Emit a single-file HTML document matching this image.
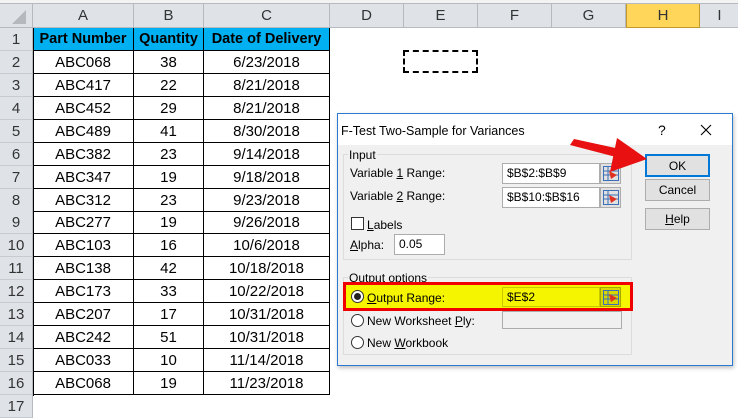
<!DOCTYPE html>
<html><head><meta charset="utf-8"><style>
*{margin:0;padding:0;box-sizing:border-box}
body{width:738px;height:406px;overflow:hidden;background:#fff;font-family:"Liberation Sans",sans-serif;position:relative}
.a{position:absolute}
.ch{position:absolute;top:4px;height:24px;background:#dfe3e8;border-right:1px solid #b6b9bd;border-bottom:1px solid #b6b9bd;text-align:center;font-size:15px;line-height:24px;color:#333}
.rh{position:absolute;left:0;width:33px;height:23px;background:#dfe3e8;border-right:1px solid #b6b9bd;border-bottom:1px solid #c8cbcf;text-align:center;font-size:15px;line-height:23px;color:#333}
.c{position:absolute;height:23px;border-right:1px solid #000;border-bottom:1px solid #000;text-align:center;font-size:15px;line-height:23px;color:#000}
.h{background:#00b0f0;font-weight:bold;font-size:14.5px}
.dl{position:absolute;font-size:12px;color:#000;line-height:14px}
.tf{position:absolute;background:#fff;border:1px solid #acacac;font-size:12px;line-height:18px;padding-left:10px}
.ib{position:absolute;width:21px;height:21px;background:#e1e1e1;border:1px solid #acacac}
.btn{position:absolute;left:645px;width:65px;height:22px;background:#e1e1e1;border:1px solid #adadad;font-size:12px;text-align:center;line-height:20px}
.gb{position:absolute;border:1px solid #dcdcdc}
.rad{position:absolute;width:13px;height:13px;border:1px solid #333;border-radius:50%;background:#fff}
</style></head><body>
<div class="a" style="left:0;top:0;width:738px;height:4px;background:#f3f3f3;border-bottom:1px solid #b6b9bd"></div>
<div class="ch" style="left:0;width:33px"><svg width="33" height="24"><polygon points="26,6 26,20 12,20" fill="#b5b9bd"/></svg></div>
<div class="ch" style="left:33px;width:101px">A</div>
<div class="ch" style="left:134px;width:70px">B</div>
<div class="ch" style="left:204px;width:126px">C</div>
<div class="ch" style="left:330px;width:74px">D</div>
<div class="ch" style="left:404px;width:74px">E</div>
<div class="ch" style="left:478px;width:74px">F</div>
<div class="ch" style="left:552px;width:74px">G</div>
<div class="ch" style="left:626px;width:74px;background:#ffd55a;border:1px solid #c29a2b;border-top:none">H</div>
<div class="ch" style="left:700px;width:40px">I</div>

<div id="rows"></div>
<script>
var d=[["Part Number","Quantity","Date of Delivery"],["ABC068","38","6/23/2018"],["ABC417","22","8/21/2018"],["ABC452","29","8/21/2018"],["ABC489","41","8/30/2018"],["ABC382","23","9/14/2018"],["ABC347","19","9/18/2018"],["ABC312","23","9/23/2018"],["ABC277","19","9/26/2018"],["ABC103","16","10/6/2018"],["ABC138","42","10/18/2018"],["ABC173","33","10/22/2018"],["ABC207","17","10/31/2018"],["ABC242","51","10/31/2018"],["ABC033","10","11/14/2018"],["ABC068","19","11/23/2018"]];
var h="";
for(var i=0;i<17;i++){var t=28+i*22.93;
h+='<div class="rh" style="top:'+t+'px">'+(i+1)+'</div>';
if(i<16){var cl=i==0?' h':'';
h+='<div class="c'+cl+'" style="top:'+t+'px;left:33px;width:101px">'+d[i][0]+'</div>';
h+='<div class="c'+cl+'" style="top:'+t+'px;left:134px;width:70px">'+d[i][1]+'</div>';
h+='<div class="c'+cl+'" style="top:'+t+'px;left:204px;width:126px">'+d[i][2]+'</div>';}}
document.getElementById("rows").innerHTML=h;
</script>
<div class="a" style="left:33px;top:28px;width:1px;height:368px;background:#000"></div>
<div class="a" style="left:403px;top:50px;width:75px;height:23px;border:2px dashed #000"></div>

<div class="a" style="left:337px;top:113px;width:396px;height:253px;background:#f0f0f0;border:1px solid #2b79d0;box-shadow:1px 2px 4px rgba(0,0,0,.25)"></div>
<div class="a" style="left:338px;top:114px;width:394px;height:31px;background:#fff"></div>
<div class="dl" style="left:341px;top:124px;font-size:12.5px">F-Test Two-Sample for Variances</div>
<div class="dl" style="left:658px;top:123px;font-size:14px">?</div>
<svg class="a" style="left:700px;top:124px" width="12" height="12"><path d="M1 1L11 11M11 1L1 11" stroke="#000" stroke-width="1.1"/></svg>

<div class="gb" style="left:343px;top:154px;width:289px;height:106px"></div>
<div class="dl" style="left:348px;top:148px;background:#f0f0f0;padding:0 1px">Input</div>
<div class="dl" style="left:350px;top:166px">Variable <u>1</u> Range:</div>
<div class="tf" style="left:502px;top:163px;width:98px;height:21px;padding-left:4px">$B$2:$B$9</div>
<div class="ib" style="left:600px;top:163px"></div>
<div class="dl" style="left:350px;top:189px">Variable <u>2</u> Range:</div>
<div class="tf" style="left:502px;top:187px;width:98px;height:21px;padding-left:4px">$B$10:$B$16</div>
<div class="ib" style="left:600px;top:187px"></div>
<div class="a" style="left:351px;top:217px;width:13px;height:13px;border:1px solid #333;background:#fff"></div>
<div class="dl" style="left:367px;top:218px"><u>L</u>abels</div>
<div class="dl" style="left:350px;top:238px"><u>A</u>lpha:</div>
<div class="tf" style="left:394px;top:234px;width:51px;height:21px;padding-left:4px">0.05</div>

<div class="gb" style="left:343px;top:277px;width:289px;height:78px"></div>
<div class="dl" style="left:348px;top:271px;background:#f0f0f0;padding:0 1px">Output options</div>
<div class="a" style="left:343px;top:282px;width:290px;height:29px;background:#f5f500;border:3px solid #f00000"></div>
<div class="rad" style="left:351px;top:290px"><div style="width:7px;height:7px;border-radius:50%;background:#222;margin:2px"></div></div>
<div class="dl" style="left:367px;top:291px"><u>O</u>utput Range:</div>
<div class="a" style="left:502px;top:287px;width:98px;height:20px;border:1px solid #c9c900;font-size:12px;line-height:18px;padding-left:4px">$E$2</div>
<div class="ib" style="left:600px;top:287px;background:#d8d800;border-color:#a6a600;height:20px"></div>
<div class="rad" style="left:351px;top:314px"></div>
<div class="dl" style="left:367px;top:314px">New Worksheet <u>P</u>ly:</div>
<div class="a" style="left:502px;top:311px;width:120px;height:18px;border:1px solid #acacac;background:#f0f0f0"></div>
<div class="rad" style="left:351px;top:336px"></div>
<div class="dl" style="left:367px;top:336px">New <u>W</u>orkbook</div>

<div class="btn" style="top:154px;border:2px solid #0078d7;height:23px">OK</div>
<div class="btn" style="top:179px">Cancel</div>
<div class="btn" style="top:208px"><u>H</u>elp</div>

<svg class="a" style="left:0;top:0" width="738" height="406">
<g fill="none" stroke="#3b6fb6" stroke-width="1">
<rect x="603.5" y="166.5" width="15" height="14"/><rect x="603.5" y="190.5" width="15" height="14"/><rect x="603.5" y="290.5" width="15" height="14"/></g>
<g stroke="#3b6fb6" stroke-width="1"><path d="M604 171H618M604 175H618M608 167V180"/><path d="M604 195H618M604 199H618M608 191V204"/><path d="M604 295H618M604 299H618M608 291V304"/></g>
<g fill="#e03020"><polygon points="609,171 617,175 611,179"/><polygon points="609,195 617,199 611,203"/><polygon points="609,294 617,298 611,302"/></g>
<polygon points="570,145 574,139 620,149 616,157" fill="#e81010"/>
<polygon points="617,138 647,159 610,172" fill="#e81010"/>
</svg>
</body></html>
